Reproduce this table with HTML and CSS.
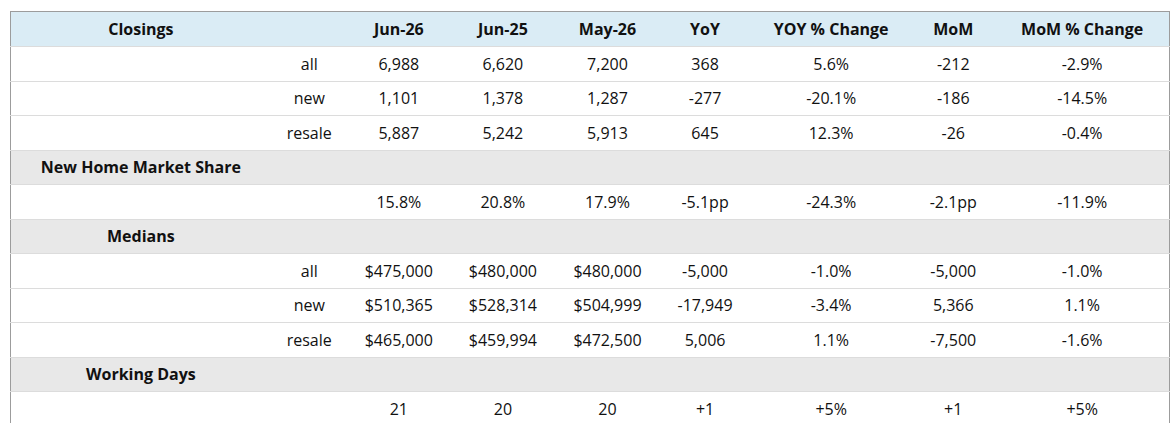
FILE: index.html
```html
<!DOCTYPE html>
<html>
<head>
<meta charset="utf-8">
<link rel="stylesheet" href="styles.css">
</head>
<body>
<table class="report">
  <colgroup>
    <col class="c-label"><col class="c-sub"><col class="c-jun26"><col class="c-jun25"><col class="c-may26"><col class="c-yoy"><col class="c-yoyp"><col class="c-mom"><col class="c-momp">
  </colgroup>
  <thead>
    <tr class="head">
      <th>Closings</th><th></th><th>Jun-26</th><th>Jun-25</th><th>May-26</th><th>YoY</th><th>YOY % Change</th><th>MoM</th><th>MoM % Change</th>
    </tr>
  </thead>
  <tbody>
    <tr><td></td><td>all</td><td>6,988</td><td>6,620</td><td>7,200</td><td>368</td><td>5.6%</td><td>-212</td><td>-2.9%</td></tr>
    <tr><td></td><td>new</td><td>1,101</td><td>1,378</td><td>1,287</td><td>-277</td><td>-20.1%</td><td>-186</td><td>-14.5%</td></tr>
    <tr><td></td><td>resale</td><td>5,887</td><td>5,242</td><td>5,913</td><td>645</td><td>12.3%</td><td>-26</td><td>-0.4%</td></tr>
    <tr class="section"><th>New Home Market Share</th><td></td><td></td><td></td><td></td><td></td><td></td><td></td><td></td></tr>
    <tr><td></td><td></td><td>15.8%</td><td>20.8%</td><td>17.9%</td><td>-5.1pp</td><td>-24.3%</td><td>-2.1pp</td><td>-11.9%</td></tr>
    <tr class="section"><th>Medians</th><td></td><td></td><td></td><td></td><td></td><td></td><td></td><td></td></tr>
    <tr><td></td><td>all</td><td>$475,000</td><td>$480,000</td><td>$480,000</td><td>-5,000</td><td>-1.0%</td><td>-5,000</td><td>-1.0%</td></tr>
    <tr><td></td><td>new</td><td>$510,365</td><td>$528,314</td><td>$504,999</td><td>-17,949</td><td>-3.4%</td><td>5,366</td><td>1.1%</td></tr>
    <tr><td></td><td>resale</td><td>$465,000</td><td>$459,994</td><td>$472,500</td><td>5,006</td><td>1.1%</td><td>-7,500</td><td>-1.6%</td></tr>
    <tr class="section"><th>Working Days</th><td></td><td></td><td></td><td></td><td></td><td></td><td></td><td></td></tr>
    <tr><td></td><td></td><td>21</td><td>20</td><td>20</td><td>+1</td><td>+5%</td><td>+1</td><td>+5%</td></tr>
  </tbody>
</table>
</body>
</html>
```
FILE: styles.css
```css
html, body {
  margin: 0;
  padding: 0;
  background: #ffffff;
}
body {
  padding: 11px 0 0 10px;
  font-family: "Open Sans", "Noto Sans", sans-serif;
  font-size: 16px;
  color: #111111;
}
.report {
  width: 1160px;
  border-collapse: collapse;
  table-layout: fixed;
  border: 1px solid #9c9c9c;
}
.c-label { width: 260px; }
.c-sub { width: 77px; }
.c-jun26 { width: 102px; }
.c-jun25 { width: 106px; }
.c-may26 { width: 103px; }
.c-yoy { width: 92px; }
.c-yoyp { width: 160px; }
.c-mom { width: 84px; }
.c-momp { width: 174px; }
.report th, .report td {
  padding: 0;
  height: 33.5px;
  text-align: center;
  vertical-align: middle;
  white-space: nowrap;
}
.report tr {
  border-bottom: 1px solid #dcdcdc;
}
.report th {
  font-weight: 700;
  color: #111111;
}
.head th {
  background: #daecf5;
  height: 34px;
}
.section th, .section td {
  background: #e8e8e8;
}
.report tbody tr:last-child {
  border-bottom: 0;
}
```
